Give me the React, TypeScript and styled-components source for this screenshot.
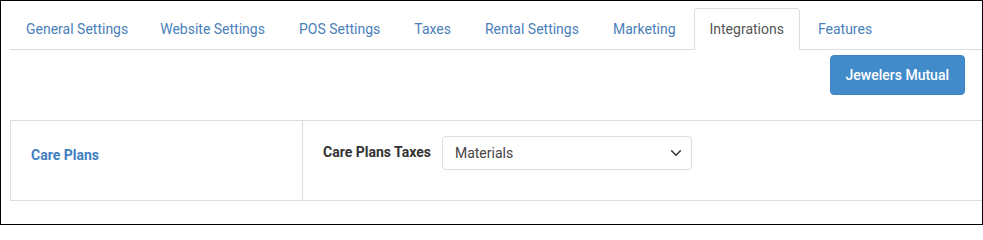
import React from "react";
import styled, { createGlobalStyle } from "styled-components";

const GlobalStyle = createGlobalStyle`
  html, body {
    margin: 0;
    padding: 0;
    background: #fff;
  }
  body {
    font-family: Roboto, "Liberation Sans", Arial, sans-serif;
    font-size: 14px;
    color: #333;
  }
`;

const tabs = [
  "General Settings",
  "Website Settings",
  "POS Settings",
  "Taxes",
  "Rental Settings",
  "Marketing",
  "Integrations",
  "Features",
];

const Frame = styled.div`
  width: 983px;
  height: 225px;
  box-sizing: border-box;
  border: 1px solid #000;
  padding: 7px 0 0 9px;
  overflow: hidden;
`;

const TabList = styled.ul`
  display: flex;
  list-style: none;
  margin: 0;
  padding: 0;
  border-bottom: 1px solid #ddd;
`;

const Tab = styled.li<{ $active?: boolean }>`
  margin-right: 2px;
  margin-bottom: -1px;
  padding: 10px 15px;
  line-height: 20px;
  border: 1px solid ${(p) => (p.$active ? "#ddd" : "transparent")};
  border-bottom-color: ${(p) => (p.$active ? "#fff" : "transparent")};
  border-radius: 4px 4px 0 0;
  background: ${(p) => (p.$active ? "#fff" : "transparent")};
  color: ${(p) => (p.$active ? "#555" : "#4a80ba")};
  cursor: pointer;
  white-space: nowrap;

  &:first-child {
    padding-right: 13px;
  }
`;

const Toolbar = styled.div`
  display: flex;
  justify-content: flex-end;
  padding: 5px 17px 0 0;
  margin-bottom: 25px;
`;

const PrimaryButton = styled.button`
  height: 40px;
  padding: 0 15px;
  border: 1px solid #3d85c6;
  border-radius: 4px;
  background: #428bca;
  color: #fff;
  font-family: Roboto, "Liberation Sans", Arial, sans-serif;
  font-size: 14px;
  font-weight: 500;
`;

const SettingsTable = styled.div`
  display: grid;
  grid-template-columns: 292px 1fr;
  height: 81px;
  box-sizing: border-box;
  border: 1px solid #ddd;
  border-right: none;
`;

const SectionCell = styled.div`
  padding: 24px 20px 0;
  border-right: 1px solid #ddd;
`;

const SectionTitle = styled.div`
  color: #3f7fbf;
  font-weight: 700;
  line-height: 20px;
`;

const FieldCell = styled.div`
  display: flex;
  align-items: flex-start;
  padding: 15px 20px 0;
  gap: 11px;
`;

const FieldLabel = styled.label`
  font-weight: 700;
  color: #333;
  line-height: 32px;
`;

const Select = styled.div`
  display: flex;
  align-items: center;
  justify-content: space-between;
  width: 250px;
  height: 34px;
  box-sizing: border-box;
  padding: 0 8px 0 12px;
  border: 1px solid #ddd;
  border-radius: 4px;
  color: #444;
`;

const Chevron = () => (
  <svg width="14" height="14" viewBox="0 0 16 16" fill="none">
    <path d="M3 5.5l5 5 5-5" stroke="#333" strokeWidth="1.7" strokeLinecap="round" strokeLinejoin="round" />
  </svg>
);

export default function App() {
  return (
    <>
      <GlobalStyle />
      <Frame>
        <TabList>
          {tabs.map((t) => (
            <Tab key={t} $active={t === "Integrations"}>
              {t}
            </Tab>
          ))}
        </TabList>
        <Toolbar>
          <PrimaryButton>Jewelers Mutual</PrimaryButton>
        </Toolbar>
        <SettingsTable>
          <SectionCell>
            <SectionTitle>Care Plans</SectionTitle>
          </SectionCell>
          <FieldCell>
            <FieldLabel>Care Plans Taxes</FieldLabel>
            <Select>
              <span>Materials</span>
              <Chevron />
            </Select>
          </FieldCell>
        </SettingsTable>
      </Frame>
    </>
  );
}
